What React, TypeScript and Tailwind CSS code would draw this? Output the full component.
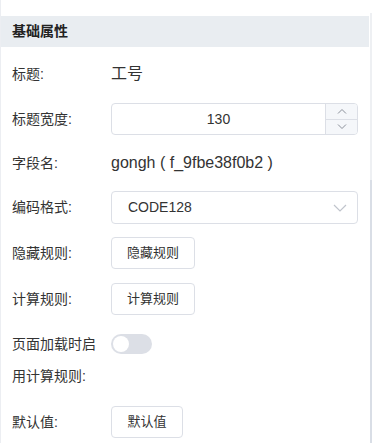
import React from 'react';

const font = { fontFamily: '"Liberation Sans", "Noto Sans CJK SC", sans-serif' };

const Label: React.FC<{ children: React.ReactNode }> = ({ children }) => (
  <div className="w-[99px] shrink-0 text-[14px] leading-[32px] text-[#333]">{children}</div>
);

const RuleButton: React.FC<{ text: string; w: string }> = ({ text, w }) => (
  <button className={`${w} h-[32px] rounded-[4px] border border-[#dcdfe6] bg-white text-[13px] text-[#333]`}>
    {text}
  </button>
);

const App: React.FC = () => {
  return (
    <div className="w-[372px] h-[443px] flex bg-white overflow-hidden" style={font}>
      {/* left edge */}
      <div className="w-[1px] bg-[#eceef2]" />

      <div className="flex-1 pt-[16px]">
        <div className="h-[31px] bg-[#e9edf1] px-[11px] flex items-center text-[14px] font-bold text-[#222]">
          基础属性
        </div>

        <div className="pl-[11px] pr-[11px]">
          {/* 标题 */}
          <div className="flex mt-[11px]">
            <Label>标题:</Label>
            <div className="text-[16px] leading-[32px] text-[#333]">工号</div>
          </div>

          {/* 标题宽度 */}
          <div className="flex mt-[13px]">
            <Label>标题宽度:</Label>
            <div className="flex-1 h-[32px] flex rounded-[4px] border border-[#dcdfe6] overflow-hidden">
              <div className="flex-1 flex items-center justify-center text-[14px] text-[#333]">130</div>
              <div className="w-[32px] flex flex-col bg-[#f5f7fa] border-l border-[#dcdfe6]">
                <div className="flex-1 flex items-center justify-center border-b border-[#dcdfe6]">
                  <svg width="10" height="6" viewBox="0 0 10 6" fill="none" stroke="#8a8f99" strokeWidth="1">
                    <path d="M1 5.5 L5 1.5 L9 5.5" />
                  </svg>
                </div>
                <div className="flex-1 flex items-center justify-center">
                  <svg width="10" height="6" viewBox="0 0 10 6" fill="none" stroke="#8a8f99" strokeWidth="1">
                    <path d="M1 0.5 L5 4.5 L9 0.5" />
                  </svg>
                </div>
              </div>
            </div>
          </div>

          {/* 字段名 */}
          <div className="flex mt-[12px]">
            <Label>字段名:</Label>
            <div className="text-[16px] leading-[32px] text-[#333]">gongh ( f_9fbe38f0b2 )</div>
          </div>

          {/* 编码格式 */}
          <div className="flex mt-[12px]">
            <Label>编码格式:</Label>
            <div className="flex-1 h-[33px] flex items-center justify-between pl-[16px] pr-[10px] rounded-[4px] border border-[#dcdfe6]">
              <span className="text-[14px] text-[#333]">CODE128</span>
              <svg width="14" height="8" viewBox="0 0 14 8" fill="none" stroke="#c0c4cc" strokeWidth="1.2">
                <path d="M1 1 L7 7 L13 1" />
              </svg>
            </div>
          </div>

          {/* 隐藏规则 */}
          <div className="flex mt-[13px]">
            <Label>隐藏规则:</Label>
            <RuleButton text="隐藏规则" w="w-[84px]" />
          </div>

          {/* 计算规则 */}
          <div className="flex mt-[14px]">
            <Label>计算规则:</Label>
            <RuleButton text="计算规则" w="w-[84px]" />
          </div>

          {/* 页面加载时启用计算规则 */}
          <div className="flex mt-[13px]">
            <Label>
              页面加载时启
              <br />
              用计算规则:
            </Label>
            <div className="mt-[6px] w-[41px] h-[20px] rounded-full bg-[#dcdfe6] p-[2px]">
              <div className="w-[16px] h-[16px] rounded-full bg-white" />
            </div>
          </div>

          {/* 默认值 */}
          <div className="flex mt-[14px]">
            <Label>默认值:</Label>
            <RuleButton text="默认值" w="w-[72px]" />
          </div>
        </div>
      </div>

      {/* scrollbar */}
      <div className="w-[3px] flex flex-col pl-[1px]">
        <div className="h-[13px]" />
        <div className="flex-1 flex flex-col bg-[#eef0f3]">
          <div className="h-[167px]" />
          <div className="flex-1 bg-[#d9dee6]" />
        </div>
      </div>
    </div>
  );
};

export default App;
